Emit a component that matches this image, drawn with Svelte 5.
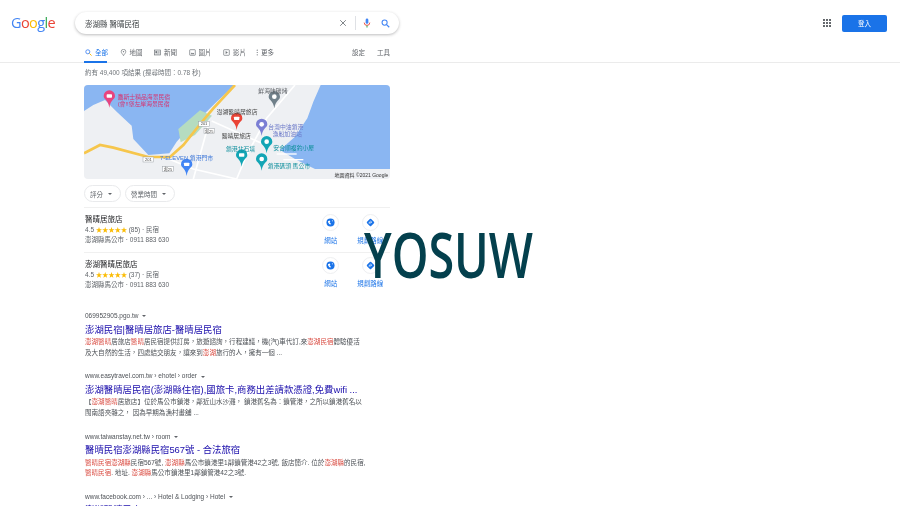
<script>
	const places = [
		{ name: '醫晴居旅店', rating: '4.5', count: '(85)', phone: '澎湖縣馬公市 · 0911 883 630' },
		{ name: '澎湖醫晴居旅店', rating: '4.5', count: '(37)', phone: '澎湖縣馬公市 · 0911 883 630' }
	];
	const tabs = [
		{ label: '全部', icon: 'search', active: true },
		{ label: '地圖', icon: 'pin' },
		{ label: '新聞', icon: 'news' },
		{ label: '圖片', icon: 'image' },
		{ label: '影片', icon: 'video' },
		{ label: '更多', icon: 'dots' }
	];
</script>

{#snippet mapPin(x, y, color, glyph)}
	<g transform="translate({x} {y})">
		<path d="M0 20C-4-6-17-4-17-15a17 17 0 0 1 34 0C17-4 4-6 0 20z" fill={color} />
		{#if glyph === 'dot'}
			<circle cy="-15" r="7" fill="#fff" />
		{:else}
			<rect x="-8" y="-20" width="16" height="10" rx="2" fill="#fff" />
		{/if}
	</g>
{/snippet}

{#snippet shield(x, y, label)}
	<rect x={x - 16} {y} width="32" height="15" fill="#fff" stroke="#9aa0a6" stroke-width="1.5" />
	<text x={x} y={y + 12} text-anchor="middle" font-size="12" fill="#444">{label}</text>
{/snippet}

<div class="page">
	<header class="top">
		<div class="logo"><span class="b">G</span><span class="r">o</span><span class="y">o</span><span class="b">g</span><span class="g">l</span><span class="r">e</span></div>
		<div class="search">
			<span class="query">澎湖縣 醫晴民宿</span>
			<svg class="x" viewBox="0 0 10 10"><path d="M1.500 1.500l7 7M8.500 1.500l-7 7" stroke="#70757a" stroke-width="1.100" /></svg>
			<span class="sep"></span>
			<svg class="mic" viewBox="0 0 10 12">
				<rect x="3.300" y="0.500" width="3.400" height="6.500" rx="1.700" fill="#4285f4" />
				<path d="M1.500 5.500a3.500 3.500 0 0 0 7 0" fill="none" stroke="#ea4335" stroke-width="1.100" />
				<path d="M5 9v2.500" stroke="#34a853" stroke-width="1.300" />
			</svg>
			<svg class="lens" viewBox="0 0 12 12"><circle cx="4.800" cy="4.800" r="3.400" fill="none" stroke="#4285f4" stroke-width="1.400" /><path d="M7.400 7.400l3.600 3.600" stroke="#4285f4" stroke-width="1.600" /></svg>
		</div>
		<div class="right">
			<svg class="apps" viewBox="0 0 9 9" fill="#5f6368">
				{#each [0, 3.4, 6.8] as py}
					{#each [0, 3.4, 6.8] as px}
						<rect x={px} y={py} width="2.200" height="2.200" />
					{/each}
				{/each}
			</svg>
			<button class="login">登入</button>
		</div>
	</header>

	<nav class="tabs">
		<div class="tablist">
			{#each tabs as tab}
				<div class="tab" class:active={tab.active}>
					{#if tab.icon === 'dots'}
						<svg class="tabicon narrow" viewBox="2.600 0 2.800 8">
							<circle cx="4" cy="1.400" r=".7" fill="#70757a" />
							<circle cx="4" cy="4" r=".7" fill="#70757a" />
							<circle cx="4" cy="6.600" r=".7" fill="#70757a" />
						</svg>
					{:else}
						<svg class="tabicon" viewBox="0 0 8 8">
							{#if tab.icon === 'search'}
								<circle cx="3.200" cy="3.200" r="2.300" fill="none" stroke="#4285f4" />
								<path d="M5 5l2.500 2.500" stroke="#fbbc04" stroke-width="1.100" />
							{:else if tab.icon === 'pin'}
								<path d="M4 7.600C3 5.600 1.400 4.700 1.400 3a2.600 2.600 0 0 1 5.200 0C6.600 4.700 5 5.600 4 7.600z" fill="none" stroke="#70757a" stroke-width=".8" />
								<circle cx="4" cy="3" r=".8" fill="#70757a" />
							{:else if tab.icon === 'news'}
								<rect x=".6" y="1.200" width="6.800" height="5.600" fill="none" stroke="#70757a" stroke-width=".8" />
								<rect x="1.600" y="2.400" width="2.200" height="2.200" fill="#70757a" />
								<path d="M4.500 3h2M4.500 4.200h2M1.600 5.600h4.800" stroke="#70757a" stroke-width=".6" />
							{:else if tab.icon === 'image'}
								<rect x=".8" y=".8" width="6.400" height="6.400" rx=".6" fill="none" stroke="#70757a" stroke-width=".8" />
								<path d="M1.800 6l1.500-2 1 1.200.8-.8 1.100 1.600z" fill="#70757a" />
							{:else}
								<rect x=".8" y=".8" width="6.400" height="6.400" rx=".6" fill="none" stroke="#70757a" stroke-width=".8" />
								<path d="M3 2.400v3.200L5.600 4z" fill="#70757a" />
							{/if}
						</svg>
					{/if}
					<span>{tab.label}</span>
				</div>
			{/each}
		</div>
		<div class="tools"><span>設定</span><span>工具</span></div>
	</nav>

	<main class="results">
		<p class="stats">約有 49,400 項結果 (搜尋時間：0.78 秒)</p>

		<div class="map">
			<svg viewBox="12 10 918 282" width="306" height="94">
				<rect x="12" y="10" width="918" height="282" fill="#eef0f3" />
				<path d="M12 10H465L410 60 370 100 330 135 290 180 268 215 205 220 160 172 155 132 110 90 75 55 40 70 12 88z" fill="#8ab6f2" />
				<path d="M930 10H722L700 60 682 110 645 165 600 205 650 235 705 262H930z" fill="#8ab6f2" />
				<path d="M295 142L360 86 396 102 345 160 302 182z" fill="#b5dcc0" />
				<g fill="none" stroke="#fff" stroke-width="5">
					<path d="M645 10L560 110 500 220 470 292" />
					<path d="M395 118L545 185" />
					<path d="M385 130L340 292" />
					<path d="M250 225L340 262 470 292" />
				</g>
				<path d="M465 10L400 80 368 118 310 190 270 226H205L100 198 60 190 12 215" fill="none" stroke="#f6c64c" stroke-width="8" />
				<g fill="#fff">
					<rect x="590" y="215" width="60" height="4" />
					<rect x="610" y="232" width="60" height="4" />
				</g>
				{@render shield(372, 119, '201')}
				{@render shield(388, 141, '滬25')}
				{@render shield(205, 226, '201')}
				{@render shield(264, 255, '滬25')}
				{@render mapPin(88, 58, '#e8447f')}
				{@render mapPin(583, 60, '#70808a', 'dot')}
				{@render mapPin(470, 125, '#ea4335')}
				{@render mapPin(545, 143, '#7b7fd4', 'dot')}
				{@render mapPin(560, 195, '#12a5b5', 'dot')}
				{@render mapPin(485, 235, '#12a5b5')}
				{@render mapPin(545, 247, '#12a5b5', 'dot')}
				{@render mapPin(320, 263, '#4285f4')}
				<g class="maptext">
					<text x="113" y="53" fill="#d6336f">鷹斯士精品海景民宿</text>
					<text x="113" y="72" fill="#d6336f">(會!!堡左岸海景民宿</text>
					<text x="535" y="35" fill="#5f6368">鮮海味碳烤</text>
					<text x="410" y="98" fill="#444">澎湖醫晴居旅店</text>
					<text x="425" y="169" fill="#444">醫晴居旅店</text>
					<text x="565" y="141" fill="#6a78c8">台灣中油鎖港</text>
					<text x="578" y="163" fill="#6a78c8">漁船加油站</text>
					<text x="580" y="206" fill="#12909e">安合順複釣小屋</text>
					<text x="438" y="209" fill="#12909e">鎖港北石塔</text>
					<text x="563" y="258" fill="#12909e">鎖港碼頭 馬公市</text>
					<text x="240" y="236" fill="#3f78d8">7-ELEVEN 鎖港門市</text>
				</g>
				<rect x="755" y="268" width="175" height="24" fill="#eef0f3" opacity=".7" />
				<text x="925" y="285" text-anchor="end" font-size="15" fill="#333">地圖資料 ©2021 Google</text>
			</svg>
		</div>

		<div class="chips">
			<div class="chip">評分<i></i></div>
			<div class="chip">營業時間<i></i></div>
		</div>

		<section class="places">
			{#each places as place}
				<div class="place">
					<div class="info">
						<div class="pname">{place.name}</div>
						<div class="meta">{place.rating} <span class="stars">★★★★★</span> {place.count} · 民宿</div>
						<div class="meta">{place.phone}</div>
					</div>
					<div class="action">
						<span class="circle">
							<svg viewBox="0 0 10 10"><circle cx="5" cy="5" r="4.500" fill="#1a73e8" /><path d="M2.200 3.600l1.700-.8.900.9-.8 1.300 1.300.9-.4 1.700-1.300-.9-1.200-1.700zM6.500 2.200l1.200.9-.8 1.200z" fill="#fff" /></svg>
						</span>
						<span class="alabel">網站</span>
					</div>
					<div class="action">
						<span class="circle">
							<svg viewBox="0 0 10 10"><rect x="1.800" y="1.800" width="6.400" height="6.400" rx="1" transform="rotate(45 5 5)" fill="#1a73e8" /><path d="M3.600 6.400V4.600h2.200M5 3.300l1.400 1.300L5 5.900" fill="none" stroke="#fff" stroke-width=".8" /></svg>
						</span>
						<span class="alabel">規劃路線</span>
					</div>
				</div>
			{/each}
		</section>

		<article class="result">
			<div class="url">069952905.pgo.tw <i></i></div>
			<h3>澎湖民宿|醫晴居旅店-醫晴居民宿</h3>
			<p><em>澎湖醫晴</em>居旅店<em>醫晴</em>居民宿提供訂房，旅遊諮詢，行程建議，機(汽)車代訂,來<em>澎湖民宿</em>體驗優活<br />及大自然的生活，四處結交朋友，讓來到<em>澎湖</em>旅行的人，擁有一個 ...</p>
		</article>
		<article class="result">
			<div class="url">www.easytravel.com.tw › ehotel › order <i></i></div>
			<h3>澎湖醫晴居民宿(澎湖縣住宿),國旅卡,商務出差請款憑證,免費wifi ...</h3>
			<p>【<em>澎湖醫晴</em>居旅店】位於馬公市鎖港，鄰近山水沙灘， 鎖港舊名為：鎖管港，之所以鎖港舊名以<br />閩南語夾雜之， 因為早期為漁村畫舖 ...</p>
		</article>
		<article class="result">
			<div class="url">www.taiwanstay.net.tw › room <i></i></div>
			<h3>醫晴民宿澎湖縣民宿567號 - 合法旅宿</h3>
			<p><em>醫晴民宿澎湖縣</em>民宿567號, <em>澎湖縣</em>馬公市鎖港里1鄰鎖管港42之3號, 飯店簡介. 位於<em>澎湖縣</em>的民宿,<br /><em>醫晴民宿</em>. 地址. <em>澎湖縣</em>馬公市鎖港里1鄰鎖管港42之3號.</p>
		</article>
		<article class="result">
			<div class="url">www.facebook.com › ... › Hotel &amp; Lodging › Hotel <i></i></div>
			<h3>澎湖醫晴民宿 - Home | Facebook</h3>
		</article>
	</main>

	<div class="watermark">YOSUW</div>
</div>

<style>
	:global(body) {
		margin: 0;
		background: #fff;
	}
	.page {
		position: relative;
		width: 900px;
		height: 506px;
		overflow: hidden;
		background: #fff;
		font-family: 'Liberation Sans', 'Noto Sans CJK TC', sans-serif;
		font-size: 6.5px;
		color: #4d5156;
		filter: blur(0.35px);
	}
	.top {
		display: flex;
		align-items: center;
		height: 22px;
		padding: 12px 13px 12px 11px;
	}
	.logo {
		width: 64px;
		font-family: 'Open Sans', sans-serif;
		font-size: 14.5px;
		letter-spacing: -0.6px;
		line-height: 22px;
	}
	.b { color: #4285f4; }
	.r { color: #ea4335; }
	.y { color: #fbbc05; }
	.g { color: #34a853; }
	.search {
		display: flex;
		align-items: center;
		box-sizing: border-box;
		width: 324px;
		height: 22px;
		padding: 0 9px 0 10px;
		border-radius: 11px;
		box-shadow: 0 1px 3px rgba(32, 33, 36, 0.3);
	}
	.query {
		flex: 1;
		font-size: 7.5px;
		color: #3c4043;
	}
	.x { width: 8px; height: 8px; }
	.sep { width: 1px; height: 14px; margin: 0 7px 0 8px; background: #dfe1e5; }
	.mic { width: 8px; height: 10px; margin-right: 10px; }
	.lens { width: 9px; height: 9px; }
	.right {
		display: flex;
		align-items: center;
		margin-left: auto;
	}
	.apps { width: 8px; height: 8px; margin-right: 11px; }
	.login {
		width: 45px;
		height: 17px;
		padding: 0;
		border: 0;
		border-radius: 2px;
		background: #1a73e8;
		color: #fff;
		font: inherit;
	}
	.tabs {
		display: flex;
		justify-content: space-between;
		box-sizing: border-box;
		height: 17px;
		padding: 0 510px 0 84px;
		border-bottom: 1px solid #ebebeb;
		color: #5f6368;
	}
	.tablist { display: flex; gap: 12px; }
	.tab {
		display: flex;
		align-items: center;
		gap: 3px;
		box-sizing: border-box;
		height: 17px;
		padding: 0 0 5px 1px;
		margin-bottom: -1px;
		width: 22.5px;
		white-space: nowrap;
	}
	.tab:last-child { margin-left: -2px; }
	.tab.active {
		color: #1a73e8;
		border-bottom: 2px solid #1a73e8;
		padding-bottom: 3px;
	}
	.tabicon { flex: none; width: 7px; height: 7px; }
	.tabicon.narrow { width: 2.5px; }
	.tools { display: flex; gap: 12px; align-items: center; padding-bottom: 5px; }
	.results { width: 306px; margin-left: 84px; }
	.stats { margin: 0; padding: 5px 0 0 1px; line-height: 9px; color: #70757a; }
	.map {
		height: 94px;
		margin-top: 8px;
		border-radius: 4px;
		overflow: hidden;
	}
	.map svg { display: block; }
	.maptext { font-size: 17.5px; }
	.chips { display: flex; gap: 4px; margin-top: 6px; }
	.chip {
		display: flex;
		align-items: center;
		gap: 5px;
		height: 15px;
		padding: 0 8px 0 5px;
		border: 1px solid #e9eaec;
		border-radius: 9px;
		color: #5f6368;
	}
	.chip i, .url i {
		display: inline-block;
		width: 0;
		height: 0;
		border: 2px solid transparent;
		border-top: 2.5px solid #5f6368;
		border-bottom: 0;
	}
	.places { margin-top: 5px; border-top: 1px solid #f0f0f0; }
	.place {
		display: flex;
		height: 45px;
		box-sizing: border-box;
		border-bottom: 1px solid #f0f0f0;
	}
	.place:last-child { border-bottom: 0; }
	.place:last-child .action { padding-top: 4px; }
	.info { flex: 1; padding: 7px 0 0 1px; }
	.pname { font-size: 7.5px; line-height: 9.5px; color: #202124; }
	.meta { line-height: 10.25px; color: #5f6368; }
	.stars { color: #fbbc04; font-size: 6.5px; letter-spacing: -0.3px; }
	.action {
		display: flex;
		flex-direction: column;
		align-items: center;
		width: 39.5px;
		padding-top: 6px;
	}
	.circle {
		display: flex;
		align-items: center;
		justify-content: center;
		box-sizing: border-box;
		width: 17px;
		height: 17px;
		border-radius: 50%;
		border: 1px solid #eeeff1;
	}
	.circle svg { width: 9px; height: 9px; }
	.alabel { margin-top: 5px; color: #1a73e8; line-height: 9px; white-space: nowrap; }
	.result { margin-top: 13.3px; padding-left: 1px; }
	.result:first-of-type { margin-top: 13px; }
	.url { line-height: 9px; color: #4d5156; white-space: nowrap; }
	.url i { margin-left: 2px; vertical-align: middle; }
	h3 {
		margin: 2.5px 0 0;
		font-size: 9.4px;
		font-weight: 400;
		line-height: 13px;
		color: #1a0dab;
		white-space: nowrap;
	}
	.result p {
		margin: 1.5px 0 0;
		font-size: 6.55px;
		line-height: 10.5px;
		white-space: nowrap;
	}
	em { font-style: normal; color: #d9493f; }
	.watermark {
		position: absolute;
		left: 364px;
		top: 211px;
		font-family: 'Open Sans', sans-serif;
		font-weight: 600;
		font-size: 64px;
		line-height: 86px;
		color: #04404d;
		transform: scaleX(0.73);
		transform-origin: left top;
	}
</style>
